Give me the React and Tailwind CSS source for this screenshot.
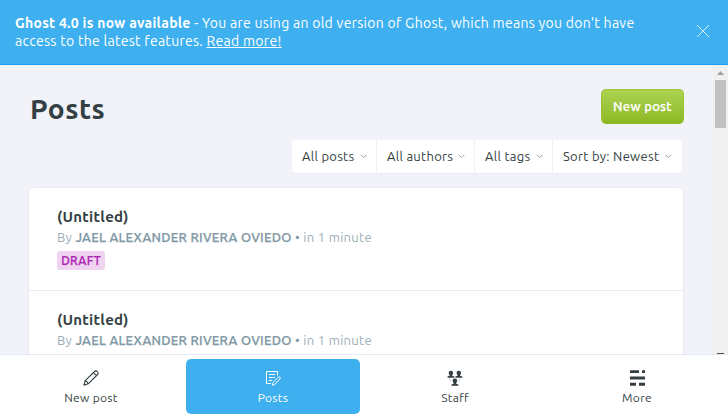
import React from "react";

const filters = [
  { label: "All posts", box: "w-[84px]", text: "w-[53px]" },
  { label: "All authors", box: "w-[98px]", text: "w-[66px]" },
  { label: "All tags", box: "w-[78px]", text: "w-[46px]" },
  { label: "Sort by: Newest", box: "w-[130px]", text: "w-[97px]" },
];

function Chevron() {
  return (
    <svg className="h-[5px] w-[7px] shrink-0" viewBox="0 0 7 5" fill="none" stroke="#9aa5ae">
      <path d="M.5 .7 3.5 3.7 6.5 .7" />
    </svg>
  );
}

function PencilIcon() {
  return (
    <svg className="size-4" viewBox="0 0 16 16" fill="none" stroke="#343f44" strokeWidth="1.1" strokeLinejoin="round">
      <path d="M.9 15.1 2.2 10.7 11.6 1.5C12.4.7 13.5.7 14.4 1.6c1 .9 1 2.1.2 2.9L5.2 13.8.9 15.1ZM2.2 10.7c1.5.3 2.6 1.4 3 3.1M10.4 2.7l3 3" />
    </svg>
  );
}

function PostsIcon() {
  return (
    <svg className="size-4" viewBox="0 0 16 16" fill="none" stroke="#fff" strokeWidth="1" strokeLinejoin="round">
      <path d="M6 13.5H1.5V1.5H12.5V5.5M4 4.5h6M4 7.5h6M4 10.5h3" />
      <path d="M7.5 15.3 8.2 12.4 13.3 7.2c.6-.6 1.2-.5 1.7 0s.6 1.2 0 1.8l-5.2 5.4-2.3.9Z" />
    </svg>
  );
}

function Person({ x, y }) {
  return (
    <g transform={`translate(${x} ${y})`}>
      <path d="M1.2 2.4C1.2.9 2 .2 3.4.2s2.2.7 2.2 2.2c0 .9-.3 1.7-.9 2.2v.7l2.2.8v1.2H0V6.1l2.1-.8v-.7c-.6-.5-.9-1.3-.9-2.2Z" />
    </g>
  );
}

function StaffIcon() {
  return (
    <svg className="size-4" viewBox="0 0 16 16" fill="#343f44">
      <Person x={0.5} y={0.5} />
      <Person x={8.4} y={0.5} />
      <Person x={4.5} y={8.4} />
      <path d="m2.2 8.8 2.2 2.1M13.7 8.8l-2.2 2.1" stroke="#89949a" strokeWidth=".7" />
    </svg>
  );
}

function MoreIcon() {
  return (
    <svg className="size-4" viewBox="0 0 16 16" fill="#343f44">
      <path d="M1 .2h9v2.9h-9ZM13 .2h3v2.9h-3ZM1 6.5h15v2.9h-15ZM1 12.8h6v2.9h-6ZM10 12.8h6v2.9h-6Z" />
    </svg>
  );
}

const tabs = [
  { label: "New post", Icon: PencilIcon },
  { label: "Posts", Icon: PostsIcon, active: true },
  { label: "Staff", Icon: StaffIcon },
  { label: "More", Icon: MoreIcon },
];

function PostRow({ status }) {
  return (
    <li className="h-[103px] border-b border-[#e5eef4] pt-[18px] pl-7">
      <h3 className="h-[21px] text-[15px] leading-[22px] font-bold text-[#343f44]">(Untitled)</h3>
      <p className="h-5 text-[13px] leading-5 whitespace-nowrap text-[#9baeb9]">
        By{" "}
        <span className="font-medium text-[#8198a5] [-webkit-text-stroke:0.25px_#8198a5]">JAEL ALEXANDER RIVERA OVIEDO</span>
        <span className="text-[#8198a5]"> • </span>in 1 minute
      </p>
      {status && (
        <span className="mt-1 flex h-[19px] w-12 items-center justify-center rounded-[3px] bg-[#efd3f1] text-[12px] font-medium text-[#ad26b4] [-webkit-text-stroke:0.25px_#ad26b4]">
          {status}
        </span>
      )}
    </li>
  );
}

export default function App() {
  return (
    <div className="flex h-[418px] w-[728px] flex-col overflow-hidden bg-[#f2f3f8] font-['Ubuntu','Noto_Sans',sans-serif] tracking-[0.29px]">
      <header className="flex h-[65px] shrink-0 justify-between border-b border-[#1a9fef] bg-[#3eb0ef] pt-[14px] pr-[19px] pl-[15px] text-white">
        <p className="text-[14px] leading-[18px] tracking-[0.28px] whitespace-nowrap">
          <b className="font-bold">Ghost 4.0 is now available</b> - You are using an old version of Ghost, which means you don't have
          <br />
          access to the latest features. <a className="underline">Read more!</a>
        </p>
        <svg className="mt-[11px] size-3" viewBox="0 0 12 12" stroke="#fff" strokeWidth=".8">
          <path d="m0 0 12 12M12 0 0 12" />
        </svg>
      </header>

      <div className="flex min-h-0 flex-1">
        <main className="min-w-0 flex-1 overflow-hidden pr-[30px] pl-[29px]">
          <div className="-mr-px flex h-[59px] items-end justify-between">
            <h1 className="pl-px text-[28px] leading-[30px] font-bold tracking-[0.5px] text-[#343f44]">Posts</h1>
            <button className="h-[35px] w-[83px] rounded-[5px] border border-[#98c334] border-b-[#8cb82a] bg-linear-to-b from-[#acd251] to-[#8eb921] text-[13px] font-medium whitespace-nowrap text-white [-webkit-text-stroke:0.25px_white]">
              New post
            </button>
          </div>
          <div className="mt-4 mr-px flex h-[33px] justify-end">
            {filters.map((f, i) => (
              <div
                key={f.label}
                className={`${f.box} flex items-center gap-[5px] bg-white pl-[10px] text-[13px] text-[#343f44] shadow-[0_1px_1px_rgba(0,0,0,0.04)] ${i ? "border-l border-[#edf0f4]" : "rounded-l"} ${i === 3 ? "rounded-r" : ""}`}
              >
                <span className={`${f.text} whitespace-nowrap`}>{f.label}</span>
                <Chevron />
              </div>
            ))}
          </div>
          <ul className="mt-[15px] rounded-[5px] bg-white shadow-[0_0_1px_rgba(60,90,120,0.2),0_1px_3px_rgba(60,90,120,0.06)]">
            <PostRow status="DRAFT" />
            <PostRow />
          </ul>
        </main>
        <aside className="flex w-[15px] shrink-0 flex-col items-center bg-[#f0f0f0]">
          <svg className="mt-[5px] h-[5px] w-[7px]" viewBox="0 0 7 5" fill="#a0a0a0">
            <path d="M0 5 3.5 1 7 5Z" />
          </svg>
          <div className="mt-[5px] h-12 w-[11px] bg-[#c1c1c1]" />
          <div className="mt-auto h-px w-[7px] bg-[#505050]" />
        </aside>
      </div>

      <nav className="grid h-16 shrink-0 grid-cols-4 border-t border-[#e0eaf2] bg-white px-0 pt-1 pb-1">
        {tabs.map(({ label, Icon, active }) => (
          <a
            key={label}
            className={`mx-1 flex flex-col items-center rounded-[5px] pt-[11px] text-[12px] ${active ? "bg-[#3eb0ef] text-white" : "text-[#343f44]"}`}
          >
            <Icon />
            <span className="mt-[3px] leading-[18px]">{label}</span>
          </a>
        ))}
      </nav>
    </div>
  );
}
